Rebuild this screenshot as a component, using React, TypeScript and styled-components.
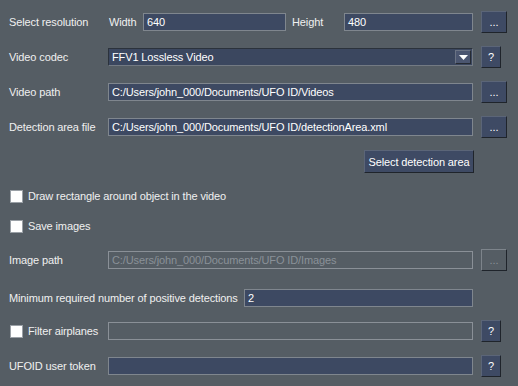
import styled, { createGlobalStyle } from "styled-components";

const Global = createGlobalStyle`
  html, body {
    margin: 0;
    background: #555d64;
  }
  body {
    font-family: "Liberation Sans", Arial, sans-serif;
    font-size: 11px;
    letter-spacing: -0.12px;
    color: #f0f0f0;
  }
`;

const Panel = styled.div`
  width: 518px;
  height: 386px;
  box-sizing: border-box;
  padding: 0 11px 0 9px;
  display: flex;
  flex-direction: column;
`;

const Row = styled.div<{ $top: number; $h?: number }>`
  display: flex;
  align-items: center;
  margin-top: ${(p) => p.$top}px;
  height: ${(p) => p.$h ?? 22}px;
`;

const Label = styled.span<{ $w?: number }>`
  flex: ${(p) => (p.$w ? `0 0 ${p.$w}px` : "1 1 auto")};
  white-space: nowrap;
  color: #f0f0f0;
`;

const Field = styled.div`
  flex: 0 0 365px;
  display: flex;
  align-items: center;
`;

const SmallLabel = styled.span<{ $w: number; $ml?: number }>`
  flex: 0 0 ${(p) => p.$w}px;
  margin-left: ${(p) => p.$ml ?? 0}px;
  white-space: nowrap;
`;

const Input = styled.div<{ $w?: number; $disabled?: boolean; $empty?: boolean }>`
  box-sizing: border-box;
  height: 18px;
  ${(p) => (p.$w ? `flex: 0 0 ${p.$w}px;` : "flex: 1 1 auto;")}
  border: 1px solid ${(p) => (p.$disabled || p.$empty ? "#8a9097" : "#7f868e")};
  background: ${(p) => (p.$disabled || p.$empty ? "transparent" : "#3d4962")};
  color: ${(p) => (p.$disabled ? "#8a9198" : "#ffffff")};
  padding: 0 3px;
  line-height: 16px;
  white-space: nowrap;
  overflow: hidden;
`;

const Combo = styled.div`
  box-sizing: border-box;
  flex: 1 1 auto;
  height: 18px;
  display: flex;
  align-items: center;
  justify-content: space-between;
  background: #3b475f;
  border: 1px solid #2b323c;
  border-right-color: #737a83;
  border-bottom-color: #737a83;
  padding: 0 1px 0 3px;
  color: #ffffff;
`;

const ComboArrow = styled.div`
  box-sizing: border-box;
  width: 16px;
  height: 14px;
  background: #4b5670;
  border: 1px solid #6a7384;
  border-right-color: #262b33;
  border-bottom-color: #262b33;
  display: flex;
  align-items: center;
  justify-content: center;
`;

const Slot = styled.div`
  flex: 0 0 26px;
  margin-left: 8px;
  display: flex;
  align-items: center;
`;

const Button = styled.div<{ $w: number; $h?: number; $disabled?: boolean }>`
  box-sizing: border-box;
  width: ${(p) => p.$w}px;
  height: ${(p) => p.$h ?? 22}px;
  display: flex;
  align-items: center;
  justify-content: center;
  background: ${(p) => (p.$disabled ? "transparent" : "#3e4a64")};
  border: 1px solid ${(p) => (p.$disabled ? "#7d848b" : "#5b6578")};
  border-right-color: #1f242b;
  border-bottom-color: #1f242b;
  color: ${(p) => (p.$disabled ? "#8a9198" : "#ffffff")};
  white-space: nowrap;
`;

const RightBar = styled.div`
  display: flex;
  justify-content: flex-end;
  padding-right: 33px;
`;

const Check = styled.div`
  box-sizing: border-box;
  width: 13px;
  height: 13px;
  margin-left: 1px;
  margin-right: 5px;
  background: #ffffff;
  border: 1px solid #9aa0a6;
  flex: 0 0 13px;
`;

const CheckLabel = styled.div`
  display: flex;
  align-items: center;
  flex: 0 0 99px;
  white-space: nowrap;
`;

export default function App() {
  return (
    <>
      <Global />
      <Panel>
        <Row $top={11}>
          <Label $w={99}>Select resolution</Label>
          <Field>
            <SmallLabel $w={34} $ml={1}>Width</SmallLabel>
            <Input $w={143}>640</Input>
            <SmallLabel $w={52} $ml={6}>Height</SmallLabel>
            <Input>480</Input>
          </Field>
          <Slot>
            <Button $w={26}>...</Button>
          </Slot>
        </Row>

        <Row $top={14} $h={20}>
          <Label $w={99}>Video codec</Label>
          <Field>
            <Combo>
              <span>FFV1 Lossless Video</span>
              <ComboArrow>
                <svg width="9" height="5" viewBox="0 0 9 5">
                  <path d="M0 0 L9 0 L4.5 5 Z" fill="#ffffff" />
                </svg>
              </ComboArrow>
            </Combo>
          </Field>
          <Slot>
            <Button $w={20}>?</Button>
          </Slot>
        </Row>

        <Row $top={14}>
          <Label $w={99}>Video path</Label>
          <Field>
            <Input>C:/Users/john_000/Documents/UFO ID/Videos</Input>
          </Field>
          <Slot>
            <Button $w={26}>...</Button>
          </Slot>
        </Row>

        <Row $top={13}>
          <Label $w={99}>Detection area file</Label>
          <Field>
            <Input>C:/Users/john_000/Documents/UFO ID/detectionArea.xml</Input>
          </Field>
          <Slot>
            <Button $w={26}>...</Button>
          </Slot>
        </Row>

        <Row $top={12} $h={23} as={RightBar}>
          <Button $w={110} $h={23}>Select detection area</Button>
        </Row>

        <Row $top={12} $h={22}>
          <Check />
          <span>Draw rectangle around object in the video</span>
        </Row>

        <Row $top={8}>
          <Check />
          <span>Save images</span>
        </Row>

        <Row $top={12}>
          <Label $w={99}>Image path</Label>
          <Field>
            <Input $disabled>C:/Users/john_000/Documents/UFO ID/Images</Input>
          </Field>
          <Slot>
            <Button $w={26} $disabled>...</Button>
          </Slot>
        </Row>

        <Row $top={16}>
          <Label>Minimum required number of positive detections</Label>
          <Input $w={229}>2</Input>
          <Slot />
        </Row>

        <Row $top={11}>
          <CheckLabel>
            <Check />
            <span>Filter airplanes</span>
          </CheckLabel>
          <Field>
            <Input $empty />
          </Field>
          <Slot>
            <Button $w={20}>?</Button>
          </Slot>
        </Row>

        <Row $top={13}>
          <Label $w={99}>UFOID user token</Label>
          <Field>
            <Input />
          </Field>
          <Slot>
            <Button $w={20}>?</Button>
          </Slot>
        </Row>
      </Panel>
    </>
  );
}
